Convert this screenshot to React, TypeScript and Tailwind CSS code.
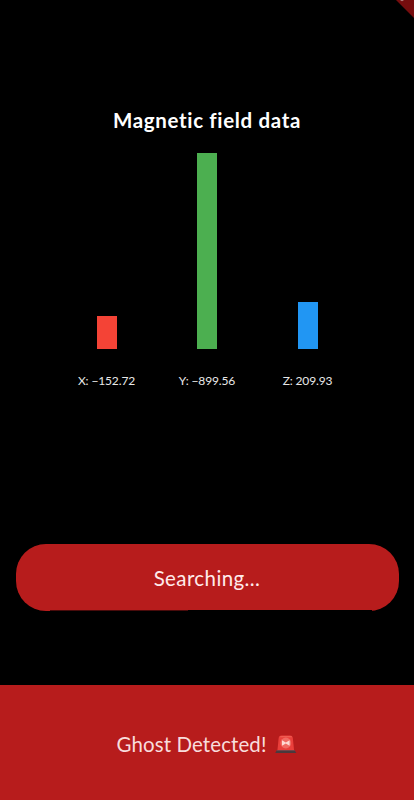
interface Reading {
  axis: string;
  value: number;
  height: number;
  color: string;
}

const readings: Reading[] = [
  { axis: 'X', value: -152.72, height: 32.5, color: 'bg-[#f44336]' },
  { axis: 'Y', value: -899.56, height: 195.5, color: 'bg-[#4caf50]' },
  { axis: 'Z', value: 209.93, height: 46.5, color: 'bg-[#2196f3]' },
];

function CornerRibbon() {
  return (
    <svg className="absolute top-0 right-0" width="18" height="18" viewBox="0 0 18 18">
      <path d="M0 0h18v18z" fill="#760d0e" />
      <path d="M4 0l2 1.2L8 0z" fill="#b78685" />
    </svg>
  );
}

function SirenIcon() {
  return (
    <svg width="24" height="20" viewBox="0 0 24 20">
      <path d="M3.4 16.5 4.7 3.8Q5 1.5 7.5 1.5h8.6q2.4 0 2.7 2.3l1.3 12.7z" fill="#e93f3b" />
      <path d="M5.5 3.2Q6 2 7.7 2h8.2q2 0 2.4 1.2z" fill="#f05c51" />
      <circle cx="11.8" cy="9" r="5.4" fill="#f06a62" />
      <path d="M8 6.2 11.8 8.4l3.8-2.2v5.6l-3.8-2.2L8 11.8z" fill="#ffd9d3" />
      <path d="M3 16h17.5l1.8 3H1.2z" fill="#4b393d" />
      <path d="M3 16h17.5l.6 1H2.4z" fill="#71464a" />
    </svg>
  );
}

function FieldChart() {
  return (
    <div className="mx-auto grid w-[301.5px] grid-cols-3">
      {readings.map((reading) => (
        <div key={reading.axis} className="flex flex-col items-center">
          <div className="flex h-[195.5px] items-end">
            <div className={`w-5 ${reading.color}`} style={{ height: reading.height }} />
          </div>
          <span className="mt-6 text-[12px] leading-4 tracking-[-0.14px] whitespace-nowrap text-[#e8e8e8]">
            {reading.axis}: {reading.value.toFixed(2).replace('-', '−')}
          </span>
        </div>
      ))}
    </div>
  );
}

export default function App() {
  return (
    <main className="relative flex h-[800px] w-[414px] flex-col overflow-hidden bg-black font-['Lato',sans-serif] text-white">
      <CornerRibbon />
      <section className="pt-[106px]">
        <h1 className="mb-[19px] text-center text-[20.5px] leading-7 font-bold tracking-[0.65px]">
          Magnetic field data
        </h1>
        <FieldChart />
      </section>

      <button className="relative mx-auto mt-[155.5px] h-[67px] w-[383px] shrink-0 rounded-[30px] bg-[#b71c1c] pt-0.5 text-[20.5px] tracking-[0.4px] text-[#ffebeb]">
        Searching...
        {/* uneven lower edge */}
        <span className="absolute bottom-0 left-[34px] h-px w-[322px] bg-black/60" />
        <span className="absolute right-[27px] bottom-0 h-px w-[184px] bg-black" />
      </button>

      <footer className="mt-auto flex h-[115px] items-center justify-center bg-[#b71c1c] pt-[3px]">
        <span className="pt-px text-[20.5px] tracking-[0.1px] text-[#f8dddd]">Ghost Detected!</span>
        <span className="ml-[7px]">
          <SirenIcon />
        </span>
      </footer>
    </main>
  );
}
